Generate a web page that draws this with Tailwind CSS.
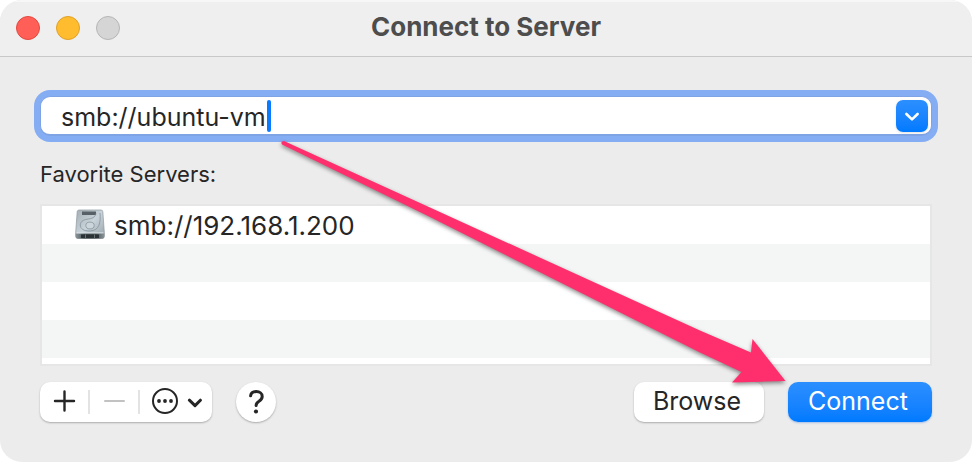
<!DOCTYPE html>
<html lang="en">

<head>
    <meta charset="UTF-8">
    <meta name="viewport" content="width=device-width, initial-scale=1.0">
    <title>Connect to Server</title>
    <script src="https://cdn.jsdelivr.net/npm/@tailwindcss/browser@4"></script>
</head>
<body class="bg-white font-[Inter,sans-serif] text-[#262626] antialiased">
    <div class="relative flex min-h-screen flex-col overflow-hidden rounded-[22px] bg-[#ececec]">
        <header class="grid h-[57px] grid-cols-[1fr_auto_1fr] items-center border-t-2 border-b border-t-[#f7f7f7] border-b-[#c8c8c8] bg-[#efefef] px-4">
            <div class="flex gap-4 pb-0.5">
                <button type="button" aria-label="Close" class="size-6 rounded-full border border-[#e2483f] bg-[#ff5f57]"></button>
                <button type="button" aria-label="Minimize" class="size-6 rounded-full border border-[#e0a028] bg-[#febc2e]"></button>
                <button type="button" aria-label="Zoom" disabled class="size-6 rounded-full border border-[#b5b5b5] bg-[#d5d5d5]"></button>
            </div>
            <h1 class="pb-1 text-[26px] leading-8 font-bold text-[#4d4d4d]">Connect to Server</h1>
        </header>

        <main class="flex grow flex-col px-10 pt-[39px] pb-10">
            <div class="relative flex h-10 items-center rounded-[10px] border border-b-2 border-[#7fa4e6] bg-white pr-[3px] pl-5 ring-6 ring-[#85adf3]">
                <input type="text" aria-label="Server address" value="smb://ubuntu-vm" class="h-full min-w-0 grow bg-transparent pt-0.5 text-[25px] outline-none">
                <span class="absolute top-[3px] left-[226px] h-8 w-1 rounded-full bg-[#0a7aff]"></span>
                <button type="button" aria-label="Show recent servers" class="flex size-8 items-center justify-center rounded-[7px] bg-linear-to-b from-[#2b8fff] to-[#007aff] shadow-sm">
                    <svg class="size-4" viewBox="0 0 16 16" fill="none" stroke="white" stroke-width="2.6" stroke-linecap="round" stroke-linejoin="round"><path d="M2.4 6 8 11.400l5.600-5.400"/></svg>
                </button>
            </div>

            <h2 class="mt-6 text-[22px] leading-7">Favorite Servers:</h2>
            <ul class="mt-4 h-[162px] overflow-hidden border-2 border-[#e6e6e6] bg-white">
                <li class="flex h-[38px] items-center gap-2 pl-8 text-[26px]">
                    <svg class="size-8" viewBox="0 0 32 32" fill="none">
                        <defs>
                            <linearGradient id="disk" x1="0" y1="0" x2="1" y2="1">
                                <stop offset="0" stop-color="#a2adb4"/>
                                <stop offset=".5" stop-color="#c8d3da"/>
                                <stop offset="1" stop-color="#98a3aa"/>
                            </linearGradient>
                            <linearGradient id="front" x1="0" y1="0" x2="1" y2="0">
                                <stop offset="0" stop-color="#8b969b"/>
                                <stop offset=".3" stop-color="#4a5458"/>
                                <stop offset=".7" stop-color="#4a5458"/>
                                <stop offset="1" stop-color="#8b969b"/>
                            </linearGradient>
                        </defs>
                        <path d="M5 1h22q1.600 0 1.800 1.600L30.300 23v4q0 2-2 2H3.700q-2 0-2-2v-4L3.200 2.600Q3.400 1 5 1Z" fill="url(#disk)" stroke="#8e999f" stroke-width=".7"/>
                        <path d="M1.600 24.500h28.800V28q0 1.800-1.800 1.800H3.400Q1.600 29.800 1.600 28Z" fill="url(#front)"/>
                        <path d="M7 25.500h18v3.500H7z" fill="#2b3235"/>
                        <path d="M11.500 25.500v3.500M20.500 25.500v3.500" stroke="#66716f"/>
                        <path d="M8 2.500h14V6H8z" fill="#566066"/>
                        <path d="M26 4c.8 9.500-.5 17.500-9.800 18-6.500.3-10.200-2.500-9.900-6.200.4-4.400 4.500-5.300 8.200-5.800 5.500-.8 6.800-2.800 7.500-5.500" stroke="#87939a" stroke-width=".8"/>
                        <ellipse cx="16" cy="16.500" rx="4.200" ry="3.400" fill="#cbd5db" stroke="#87939a" stroke-width=".8"/>
                        <path d="M2.500 23.800h27" stroke="#dbe3e6" stroke-width=".9"/>
                    </svg>
                    <span>smb://192.168.1.200</span>
                </li>
                <li class="h-[38px] bg-[#f4f5f5]"></li>
                <li class="h-[38px]"></li>
                <li class="h-[38px] bg-[#f4f5f5]"></li>
            </ul>

            <div class="mt-4 flex h-10 items-center gap-6">
                <div class="flex h-10 w-[172px] items-center rounded-[10px] bg-white shadow-[0_1px_2px_rgba(0,0,0,0.28)]">
                    <button type="button" aria-label="Add server" class="flex h-10 w-12 items-center justify-center">
                        <svg class="size-6" viewBox="0 0 24 24" stroke="#262626" stroke-width="2.400" stroke-linecap="round"><path d="M12.500 1.500v19M3 11h19"/></svg>
                    </button>
                    <span class="h-6 w-0.5 bg-[#e3e3e3]"></span>
                    <button type="button" aria-label="Remove server" disabled class="flex h-10 w-12 items-center justify-center">
                        <svg class="size-6" viewBox="0 0 24 24" stroke="#c2c2c2" stroke-width="2" stroke-linecap="round"><path d="M3 11h19"/></svg>
                    </button>
                    <span class="h-6 w-0.5 bg-[#e3e3e3]"></span>
                    <button type="button" aria-label="Recent servers" class="flex h-10 grow items-center gap-2 pl-3">
                        <svg class="h-7 w-[26px]" viewBox="0 0 26 28" fill="none"><circle cx="13" cy="13" r="12" stroke="#262626" stroke-width="2"/><g fill="#262626"><circle cx="7" cy="13" r="1.900"/><circle cx="13" cy="13" r="1.900"/><circle cx="19" cy="13" r="1.900"/></g></svg>
                        <svg class="size-4" viewBox="0 0 16 16" fill="none" stroke="#262626" stroke-width="3" stroke-linecap="round" stroke-linejoin="round"><path d="M3.400 6.200 9 11.600l5.400-5.400"/></svg>
                    </button>
                </div>
                <button type="button" aria-label="Help" class="flex size-10 items-center justify-center rounded-full bg-white shadow-[0_1px_2px_rgba(0,0,0,0.28)]">
                    <svg class="h-6 w-4" viewBox="0 0 16 24" fill="none" stroke="#262626" stroke-width="3" stroke-linecap="round" stroke-linejoin="round"><path d="M2.600 5.800C2.900 3 5.300 1.600 8.300 1.600c3.300 0 5.900 1.800 5.900 4.800 0 2.300-1.300 3.600-3.200 4.800-2 1.200-2.900 2.100-2.900 4.200"/><circle cx="8" cy="21.500" r="2.100" fill="#262626" stroke="none"/></svg>
                </button>
                <button type="button" class="ml-auto h-10 w-[130px] rounded-[10px] bg-white pr-1 text-[25px] shadow-[0_1px_2px_rgba(0,0,0,0.28)]">Browse</button>
                <button type="button" class="h-10 w-36 rounded-[10px] bg-linear-to-b from-[#2b8fff] to-[#007aff] pr-1 text-[25px] text-white shadow-[0_1px_2px_rgba(0,90,220,0.3)]">Connect</button>
            </div>
        </main>

        <!-- arrow from the address to the Connect button -->
        <svg class="pointer-events-none absolute top-[136px] left-[276px] h-[260px] w-[520px] drop-shadow-[0_2px_2px_rgba(0,0,0,0.45)]" viewBox="276 136 520 260" fill="#ff2e6c" aria-hidden="true">
            <path d="M284 141 430 207.500 700 330.500 751 352.500 752.500 339 785.500 381 732 382.500 741.500 372 700 352.500 430 217 282 144.500Q280 141.500 284 141Z"/>
        </svg>
    </div>
</body>

</html>
